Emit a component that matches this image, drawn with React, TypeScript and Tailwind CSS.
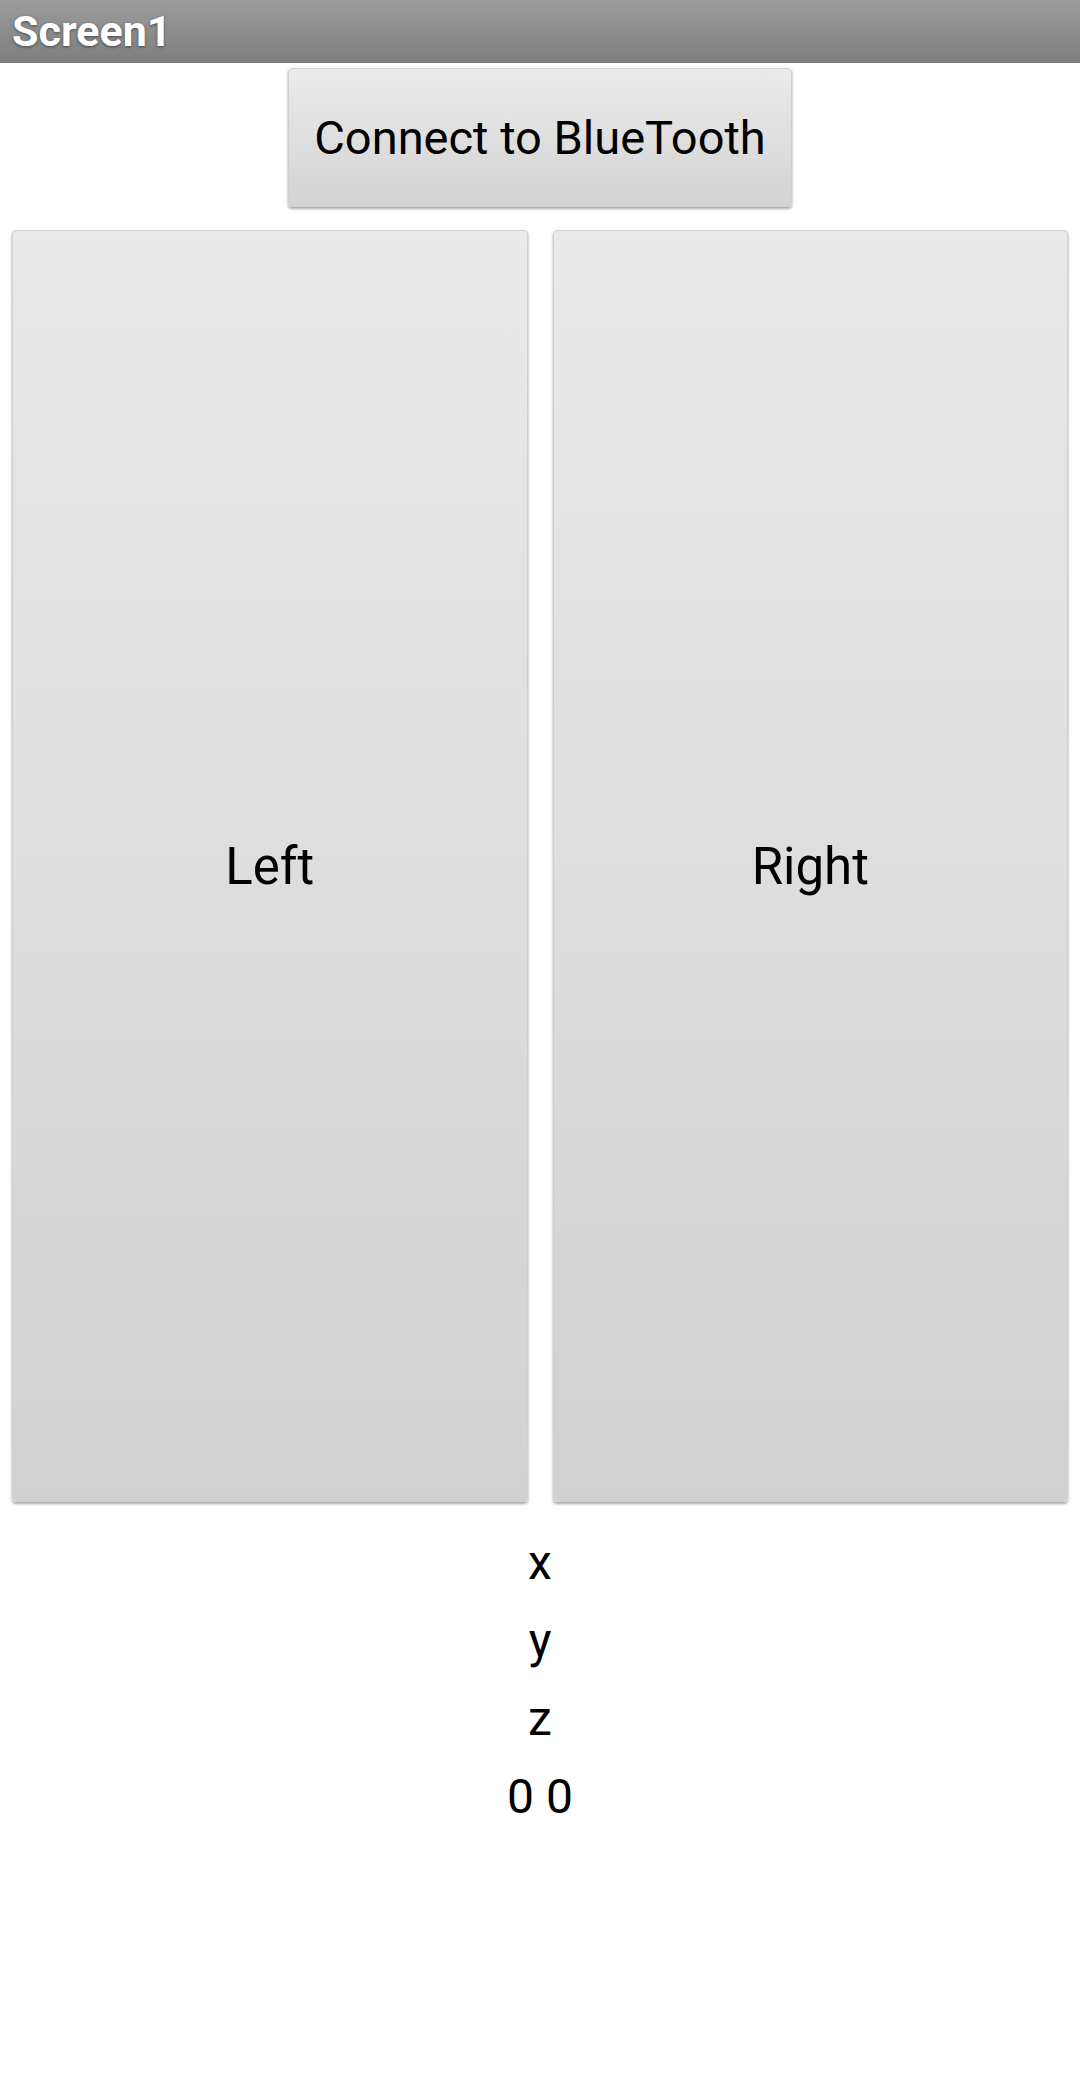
export default function App() {
    return (
        <div className="min-h-screen bg-white flex flex-col" style={{ fontFamily: "Roboto, 'Noto Sans', sans-serif" }}>
            {/* Title bar */}
            <header className="h-[63px] bg-gradient-to-b from-[#9c9c9c] to-[#7e7e7e] flex items-center px-[12px]">
                <h1 className="text-white font-bold text-[43px] leading-none [text-shadow:0_1px_3px_rgba(0,0,0,0.5)]">
                    Screen1
                </h1>
            </header>

            {/* Connect button */}
            <div className="flex justify-center pt-[5px]">
                <button className="w-[504px] h-[139px] rounded-[4px] border border-[#cfcfcf] bg-gradient-to-b from-[#ebebeb] to-[#d3d3d3] shadow-[0_2px_3px_rgba(0,0,0,0.35)] text-black text-[47px] leading-none">
                    Connect to BlueTooth
                </button>
            </div>

            {/* Left / Right pads */}
            <div className="flex gap-[25px] px-[12px] pt-[23px]">
                {["Left", "Right"].map((label) => (
                    <button
                        key={label}
                        className="flex-1 h-[1272px] rounded-[4px] border border-[#cfcfcf] bg-gradient-to-b from-[#eaeaea] to-[#d1d1d1] shadow-[0_2px_3px_rgba(0,0,0,0.35)] text-black text-[51px] leading-none flex items-center justify-center"
                    >
                        {label}
                    </button>
                ))}
            </div>

            {/* Sensor readouts */}
            <div className="flex flex-col items-center pt-[22px] text-black text-[48px]">
                <div className="h-[78px] leading-[78px]">x</div>
                <div className="h-[78px] leading-[78px]">y</div>
                <div className="h-[78px] leading-[78px]">z</div>
                <div className="h-[78px] leading-[78px]">0 0</div>
            </div>
        </div>
    );
}
